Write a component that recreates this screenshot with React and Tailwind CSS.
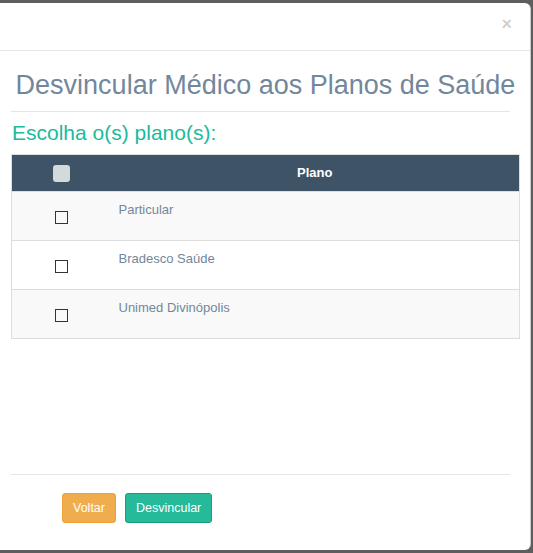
export default function App() {
  const planos = ['Particular', 'Bradesco Saúde', 'Unimed Divinópolis'];

  return (
    <div className="h-[553px] w-[533px] overflow-hidden bg-[#5e5e5e] pt-[3px] font-['Liberation_Sans',Arial,sans-serif]">
      <div className="flex h-[547px] w-[531px] flex-col rounded-r-[6px] border-r border-black/20 bg-white">
        {/* header */}
        <div className="flex h-[48px] shrink-0 items-start justify-end border-b border-[#e5e5e5] pr-[18px] pt-[12px]">
          <button className="text-[18px] font-bold leading-none text-black/20">×</button>
        </div>

        {/* body */}
        <div className="flex-1 pl-[11px] pr-[10px]">
          <h2 className="pt-[19px] text-center text-[27px] leading-[30px] text-[#73879c]">
            Desvincular Médico aos Planos de Saúde
          </h2>
          <div className="mr-[10px] mt-[11px] border-t border-[#e5e5e5]" />
          <h3 className="mt-[9px] pl-[1px] text-[21px] leading-[24px] text-[#1abb9c]">Escolha o(s) plano(s):</h3>

          <table className="mt-[9px] w-full border-collapse border border-[#dddddd] text-[13px]">
            <thead>
              <tr className="h-[37px] bg-[#3f5367] text-white">
                <th className="w-[99px] p-0">
                  <div className="mx-auto h-[17px] w-[17px] rounded-[3px] bg-[#d4d9dc]" />
                </th>
                <th className="p-0 text-center font-bold">Plano</th>
              </tr>
            </thead>
            <tbody>
              {planos.map((p, i) => (
                <tr key={p} className={`h-[49px] border-t border-[#dddddd] ${i % 2 === 0 ? 'bg-[#f9f9f9]' : 'bg-white'}`}>
                  <td className="p-0 pt-[3px] align-middle">
                    <div className="mx-auto h-[13px] w-[13px] border-[1.5px] border-[#333]" />
                  </td>
                  <td className="px-[8px] pb-[17px] pt-[8px] align-top leading-[20px] text-[#73879c]">{p}</td>
                </tr>
              ))}
            </tbody>
          </table>
        </div>

        {/* footer */}
        <div className="mx-[11px] mr-[20px] flex h-[76px] shrink-0 items-start gap-[9px] border-t border-[#e5e5e5] pl-[51px] pt-[18px]">
          <button className="h-[30px] rounded-[3px] border border-[#eea236] bg-[#f0ad4e] px-[10px] text-[12.5px] text-white">
            Voltar
          </button>
          <button className="h-[30px] rounded-[3px] border border-[#169f85] bg-[#26b99a] px-[10px] text-[12.5px] text-white">
            Desvincular
          </button>
        </div>
      </div>
    </div>
  );
}
